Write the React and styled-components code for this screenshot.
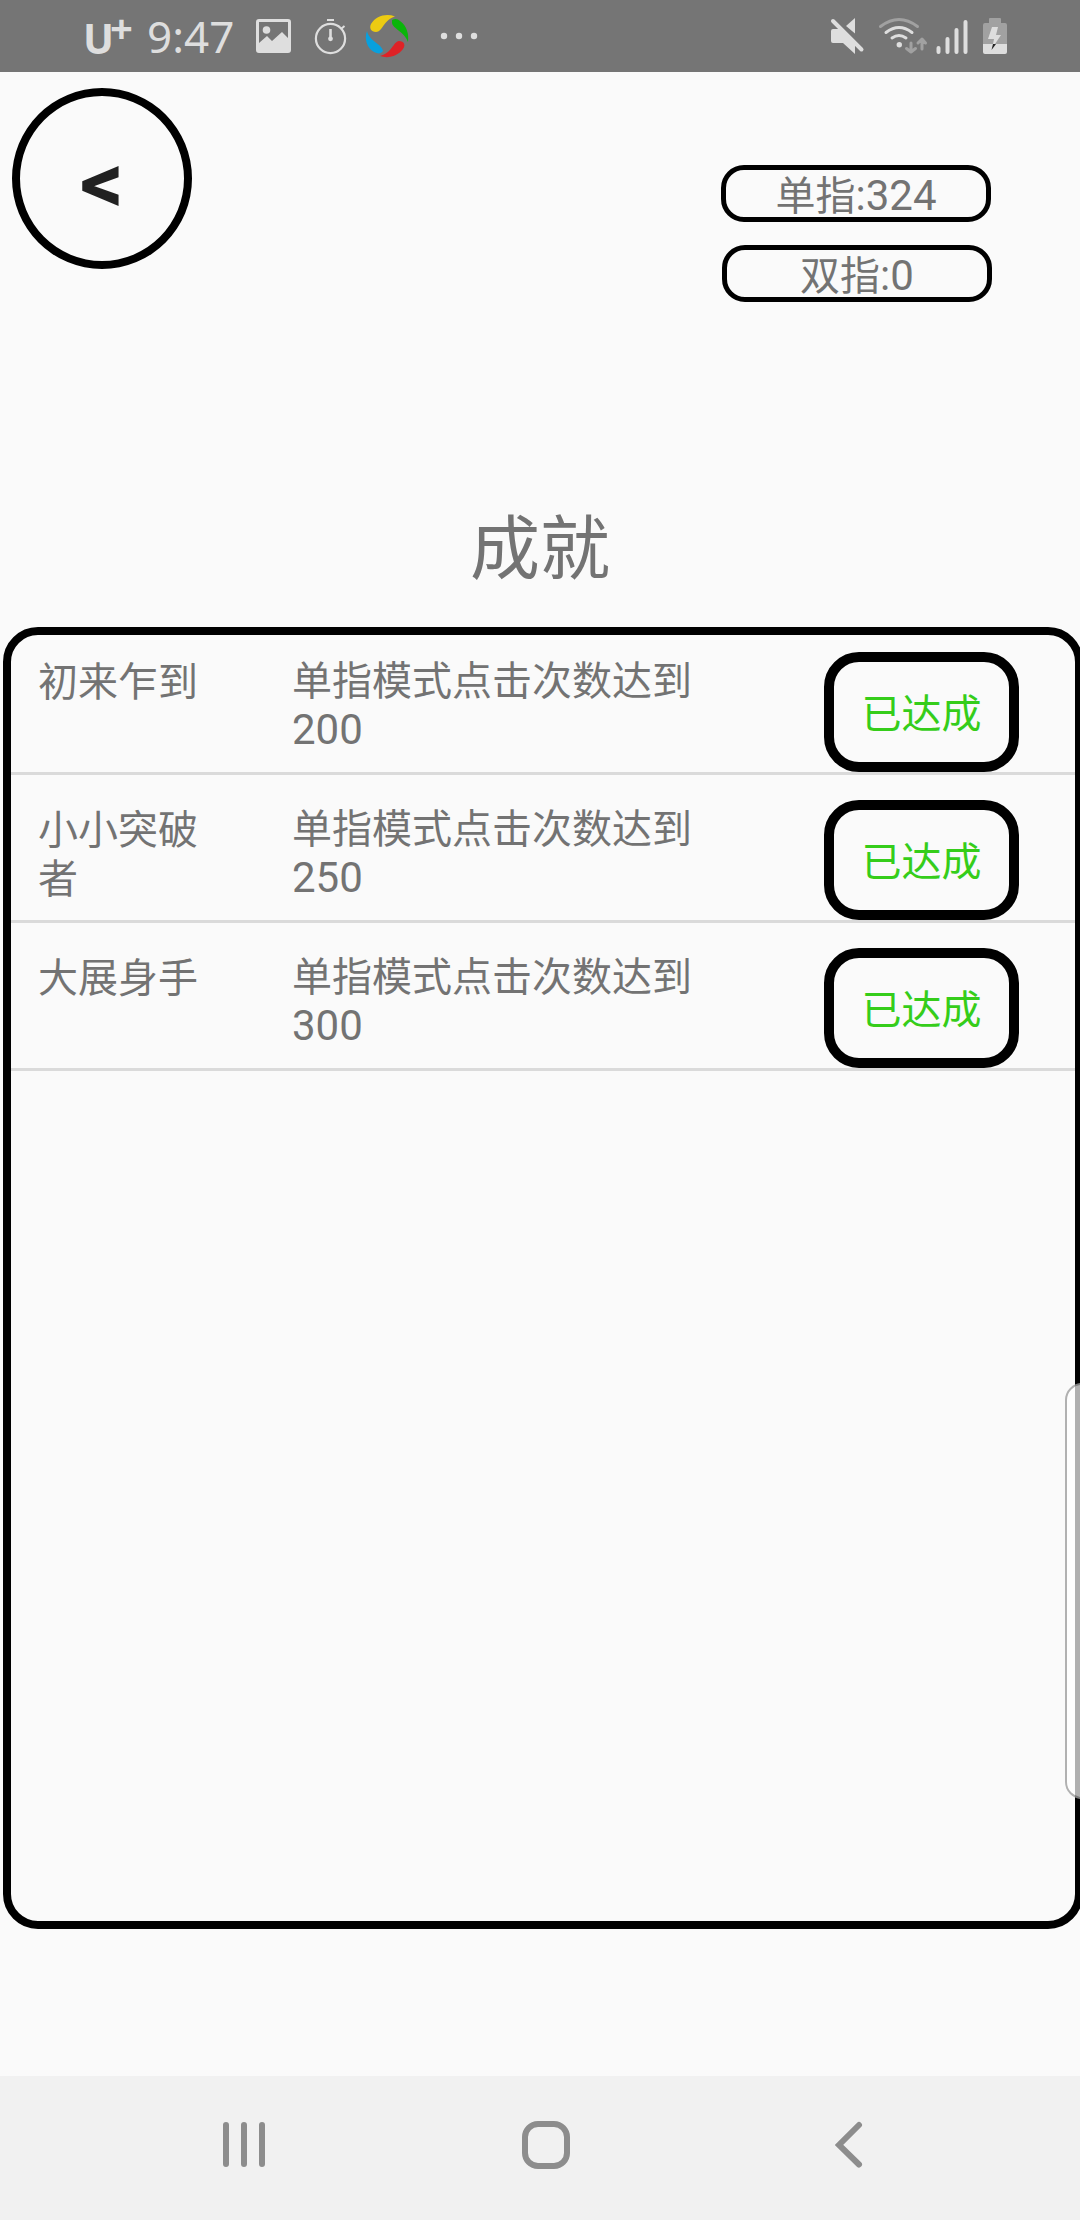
import React, { Fragment } from 'react'
import styled, { createGlobalStyle } from 'styled-components'

const GlobalStyle = createGlobalStyle`
  * {
    box-sizing: border-box;
  }
  body {
    margin: 0;
    background: #fafafa;
  }
`

const Screen = styled.div`
  position: relative;
  display: flex;
  flex-direction: column;
  width: 1080px;
  height: 2220px;
  overflow: hidden;
  background: #fafafa;
  color: #737373;
  font-family: Roboto, 'Noto Sans CJK SC', sans-serif;
  font-size: 42px;
  line-height: 49px;
`

// Chinese glyphs run slightly smaller than the latin digits next to them
const Han = styled.span`
  font-size: 40px;
  line-height: 1;
`

const StatusBar = styled.div`
  display: flex;
  flex: none;
  justify-content: space-between;
  height: 72px;
  padding: 0 73px 0 83px;
  background: #757575;
  color: #dedede;
  svg {
    display: block;
    flex: none;
  }
`

const StatusGroup = styled.div`
  display: flex;
  align-items: flex-start;
`

const Carrier = styled.div`
  display: flex;
  width: 64px;
  font-family: 'Noto Sans', sans-serif;
  font-weight: bold;
  font-size: 41px;
  line-height: 76px;
`

const CarrierPlus = styled.span`
  margin-left: -4px;
  font-size: 40px;
  line-height: 56px;
`

const Clock = styled.div`
  width: 109px;
  font-family: 'Noto Sans', sans-serif;
  font-size: 44px;
  line-height: 73px;
`

const Header = styled.div`
  display: flex;
  flex: none;
  justify-content: space-between;
  align-items: flex-start;
  height: 230px;
  padding: 16px 88px 0 12px;
`

const BackButton = styled.button`
  width: 180px;
  height: 181px;
  padding: 9px 0 0;
  border: 8px solid #000;
  border-radius: 50%;
  background: transparent;
  color: #212121;
  font-family: Roboto, sans-serif;
  font-weight: bold;
  font-size: 86px;
  line-height: 98px;
`

const Counters = styled.div`
  display: flex;
  flex-direction: column;
  align-items: flex-end;
  gap: 23px;
  padding-top: 77px;
`

const Counter = styled.div`
  width: 270px;
  height: 57px;
  margin-right: ${props => props.$shift || 0}px;
  border: 5px solid #000;
  border-radius: 23px;
  text-align: center;
  line-height: 51px;
`

const Title = styled.h1`
  flex: none;
  margin: 205px 0 33px;
  font-weight: normal;
  font-size: 70px;
  line-height: 87px;
  text-align: center;
`

const Panel = styled.div`
  flex: none;
  width: 1080px;
  height: 1302px;
  margin-left: 3px;
  border: 8px solid #000;
  border-radius: 35px;
`

const List = styled.ul`
  margin: -8px 0 0;
  padding: 0;
  list-style: none;
`

const Item = styled.li`
  display: flex;
  align-items: flex-start;
  height: 148px;
  padding-left: 27px;
  border-bottom: 3px solid #dadada;
`

const ItemName = styled.div`
  width: 170px;
  margin-right: 84px;
  padding-top: 30px;
`

const ItemText = styled.div`
  width: 420px;
  padding-top: 29px;
`

const ItemStatus = styled.div`
  width: 195px;
  height: 120px;
  margin: 25px 0 0 112px;
  border: 10px solid #000;
  border-radius: 35px;
  color: #35cd1a;
  text-align: center;
  line-height: 103px;
`

const EdgeHandle = styled.div`
  position: absolute;
  top: 1383px;
  right: -25px;
  width: 40px;
  height: 416px;
  border: 2px solid rgba(0, 0, 0, 0.3);
  border-radius: 17px;
  background: rgba(255, 255, 255, 0.69);
`

const NavBar = styled.div`
  display: flex;
  flex: none;
  align-items: center;
  height: 144px;
  margin-top: auto;
  padding: 0 0 6px 222px;
  background: #f1f1f1;
`

const NavIcon = styled.svg`
  margin-right: ${props => props.$gap}px;
  fill: none;
  stroke: #8d8d8d;
  stroke-width: 6;
  stroke-linecap: round;
`

const achievements = [
  { name: '初来乍到', count: 200 },
  { name: '小小突破者', count: 250 },
  { name: '大展身手', count: 300 }
]

function LeftIcons () {
  return (
    <Fragment>
      <svg width='36' height='72' viewBox='256 0 36 72'>
        <path fill='#dedede' fillRule='evenodd' d='M259 19h29q3 0 3 3v28q0 3-3 3h-29q-3 0-3-3V22q0-3 3-3zM259 22v21l8-7 5 5 10-9 6 6V22z' />
        <circle cx='266.500' cy='30' r='3.800' fill='#dedede' />
      </svg>
      <svg width='60' height='72' viewBox='292 0 60 72' fill='none' stroke='#dedede'>
        <circle cx='330.500' cy='38.500' r='14.600' strokeWidth='2.200' />
        <path strokeWidth='2' d='M327 20h7M341 29l3.500-3' />
        <path strokeWidth='2.600' d='M330.500 29v10' />
        <circle cx='330.500' cy='38.800' r='2.400' fill='#dedede' stroke='none' />
      </svg>
      <svg width='58' height='72' viewBox='352 0 58 72'>
        <path fill='#eccb12' d='M395 16.500C386 13 376 16 371 24c-2 4 0 8 5 8 7 0 7-12 19-15.500z' />
        <path fill='#0ab50a' d='M392 20c3-2 6-1 8 1 7 5 9 13 8 21-4-11-15-13-16-19z' />
        <path fill='#de2226' d='M380 56c8 3 18 0 23-7 3-4 1-8-4-8-6 1-7 12-19 15z' />
        <path fill='#08a0de' d='M367 31c-3 8 0 17 7 21 4 2 7 2 9-1-1-7-14-10-16-20z' />
      </svg>
      <svg width='70' height='72' viewBox='410 0 70 72' fill='#dedede'>
        <circle cx='444' cy='36' r='3.200' />
        <circle cx='459' cy='36' r='3.200' />
        <circle cx='474' cy='36' r='3.200' />
      </svg>
    </Fragment>
  )
}

function RightIcons () {
  return (
    <Fragment>
      <svg width='46' height='72' viewBox='829 0 46 72' fill='#dedede'>
        <path d='M833 29h8l14 13v12l-12-11h-10q-2 0-2-2V31q0-2 2-2zM846 26l9-8v15.500z' />
        <path d='M836 18.500l28 28' fill='none' stroke='#757575' strokeWidth='2.500' />
        <path d='M833 21l28.500 28.500' fill='none' stroke='#dedede' strokeWidth='4' strokeLinecap='round' />
      </svg>
      <svg width='57' height='72' viewBox='875 0 57 72' fill='none' stroke='#dedede' strokeWidth='3' strokeLinecap='round'>
        <path stroke='#a1a1a1' d='M880.500 26.500q18.500-14 37 0' />
        <path d='M886 32.500q13-10 26 0' />
        <path d='M892 38q7-5 14 0' />
        <circle cx='899.300' cy='44.800' r='2.700' fill='#dedede' stroke='none' />
        <path stroke='#a1a1a1' strokeLinejoin='round' d='M911 43v9M906.500 48.500l4.500 3.500 4.500-3.500M922 49v-10M918 43l4-4 3.500 4' />
      </svg>
      <svg width='45' height='72' viewBox='932 0 45 72' stroke='#dedede' strokeWidth='4' strokeLinecap='round'>
        <path d='M938.500 48v4M947.500 39v13M956.500 30v22M965.500 22v30' />
      </svg>
      <svg width='30' height='72' viewBox='977 0 30 72'>
        <path fill='#a1a1a1' d='M990 18h10q1 0 1 1v4h4q2 0 2 2v19h-24V25q0-2 2-2h4v-4q0-1 1-1z' />
        <path fill='#dedede' d='M983 44h24v8q0 2-2 2h-20q-2 0-2-2z' />
        <path fill='#dedede' d='M992 27h6l-2 8h5l-6 9h-2l1-5h-6z' />
        <path fill='#222' d='M993 44h3l-4.500 6z' />
      </svg>
    </Fragment>
  )
}

function Achievement (props) {
  const { name, count } = props
  return (
    <Item>
      <ItemName><Han>{name}</Han></ItemName>
      <ItemText>
        <Han>单指模式点击次数达到</Han><br />
        {count}
      </ItemText>
      <ItemStatus><Han>已达成</Han></ItemStatus>
    </Item>
  )
}

export default function App () {
  return (
    <Screen>
      <GlobalStyle />
      <StatusBar>
        <StatusGroup>
          <Carrier>U<CarrierPlus>+</CarrierPlus></Carrier>
          <Clock>9:47</Clock>
          <LeftIcons />
        </StatusGroup>
        <StatusGroup>
          <RightIcons />
        </StatusGroup>
      </StatusBar>
      <Header>
        <BackButton>&lt;</BackButton>
        <Counters>
          <Counter $shift={1}><Han>单指</Han>:324</Counter>
          <Counter><Han>双指</Han>:0</Counter>
        </Counters>
      </Header>
      <Title>成就</Title>
      <Panel>
        <List>
          {achievements.map(item => <Achievement key={item.name} {...item} />)}
        </List>
      </Panel>
      <NavBar>
        <NavIcon width='44' height='48' viewBox='0 0 44 48' $gap={256}>
          <path d='M4 4v39M22 4v39M40 4v39' />
        </NavIcon>
        <NavIcon width='48' height='48' viewBox='0 0 48 48' $gap={265}>
          <rect x='3' y='3' width='42' height='42' rx='13' />
        </NavIcon>
        <NavIcon width='28' height='48' viewBox='0 0 28 48' $gap={0}>
          <path d='M24 4L4 24l20 19.500' />
        </NavIcon>
      </NavBar>
      <EdgeHandle />
    </Screen>
  )
}
